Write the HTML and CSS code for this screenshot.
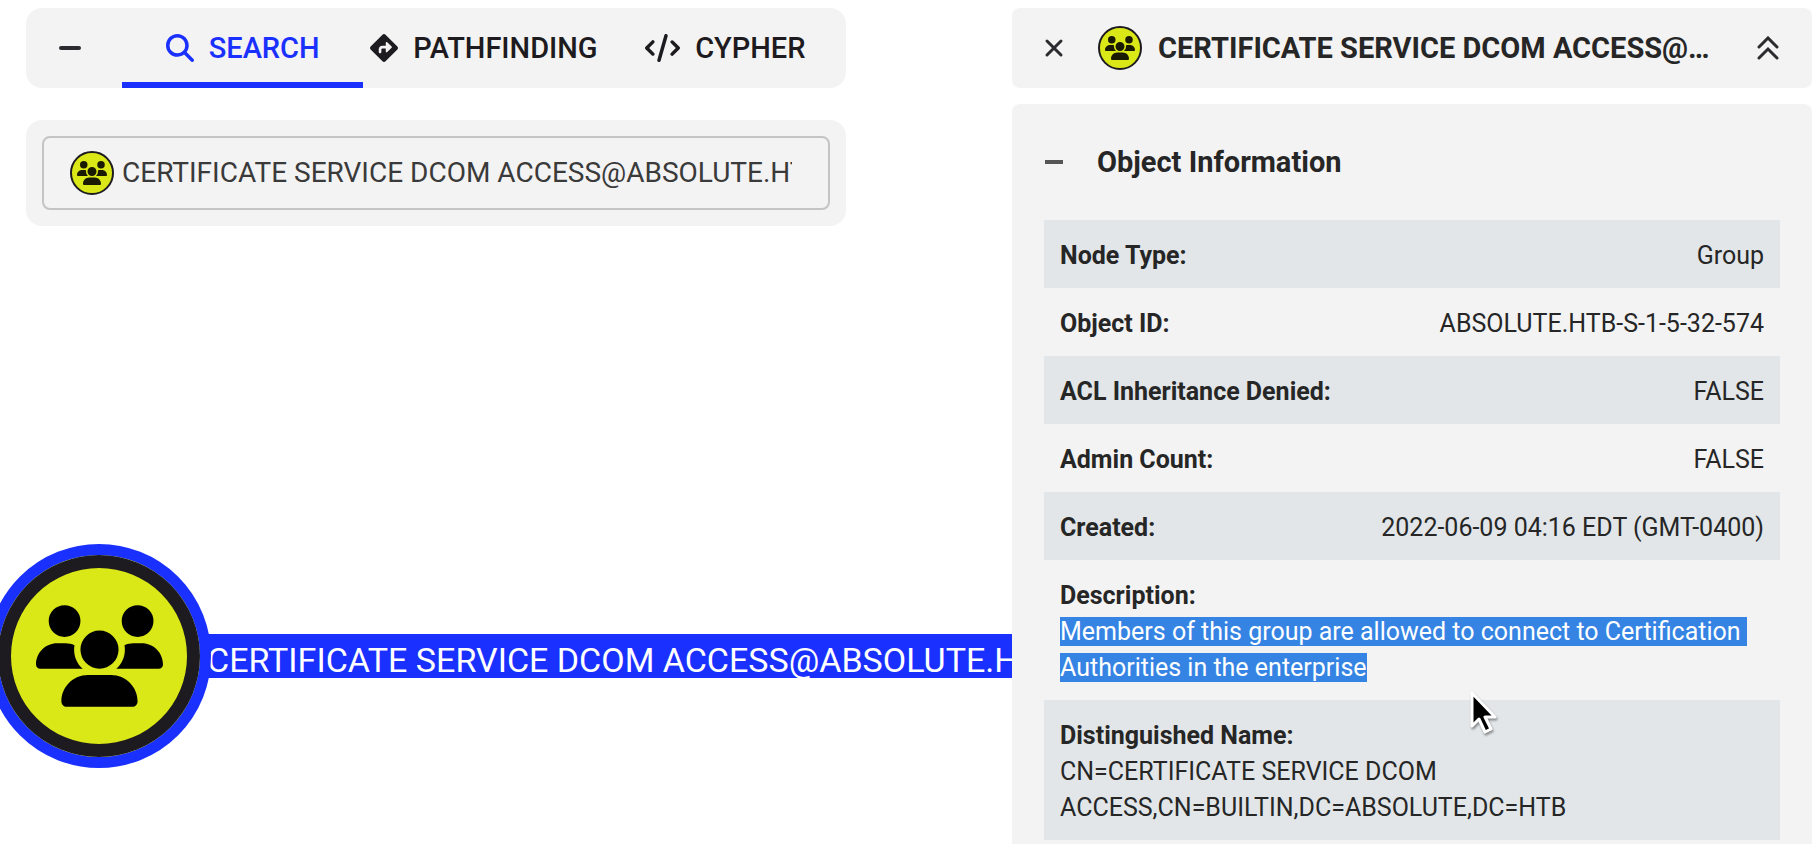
FILE: index.html
```html
<!DOCTYPE html>
<html lang="en">
<head>
<meta charset="utf-8">
<title>Explore</title>
<link rel="stylesheet" href="styles.css">
</head>
<body>
<svg class="sprite" aria-hidden="true">
  <symbol id="users" viewBox="0 0 640 512"><path d="M144 0a80 80 0 1 1 0 160A80 80 0 1 1 144 0zM512 0a80 80 0 1 1 0 160A80 80 0 1 1 512 0zM0 298.7C0 239.8 47.8 192 106.7 192h42.7c15.9 0 31 3.5 44.6 9.7c-1.3 7.2-1.9 14.7-1.9 22.3c0 38.2 16.8 72.5 43.3 96c-.2 0-.4 0-.7 0H21.3C9.6 320 0 310.4 0 298.7zM405.3 320c-.2 0-.4 0-.7 0c26.6-23.5 43.3-57.8 43.3-96c0-7.6-.7-15-1.9-22.3c13.6-6.3 28.7-9.7 44.6-9.7h42.7C592.2 192 640 239.8 640 298.7c0 11.8-9.6 21.3-21.3 21.3H405.3zM224 224a96 96 0 1 1 192 0 96 96 0 1 1 -192 0zM128 485.3C128 411.7 187.7 352 261.3 352H378.7C452.3 352 512 411.7 512 485.3c0 14.7-11.9 26.7-26.7 26.7H154.7c-14.7 0-26.7-11.9-26.7-26.7z"/></symbol>
</svg>
<main class="explore">
  <section class="graph" aria-label="Graph">
    <div class="node-label">CERTIFICATE SERVICE DCOM ACCESS@ABSOLUTE.HTB</div>
    <div class="node"><svg class="node-glyph" aria-hidden="true"><use href="#users"/></svg></div>
  </section>

  <section class="search">
    <div class="tabs-bar">
      <button class="icon-button collapse" aria-label="Collapse"><svg width="24" height="24" viewBox="0 0 24 24"><path d="M3 12H21" class="line heavy"/></svg></button>
      <div class="tabs" role="tablist">
        <button class="tab tab-active" role="tab" aria-selected="true"><svg width="28" height="28" viewBox="0 0 512 512"><path d="M416 208c0 45.9-14.9 88.3-40 122.7L502.6 457.4c12.5 12.5 12.5 32.8 0 45.3s-32.8 12.5-45.3 0L330.7 376c-34.4 25.2-76.8 40-122.7 40C93.1 416 0 322.9 0 208S93.1 0 208 0S416 93.1 416 208zM208 352a144 144 0 1 0 0-288 144 144 0 1 0 0 288z"/></svg>SEARCH</button>
        <button class="tab" role="tab" aria-selected="false"><svg width="28" height="28" viewBox="0 0 512 512"><path d="M227.7 11.7c15.6-15.6 40.9-15.6 56.6 0l216 216c15.6 15.6 15.6 40.9 0 56.6l-216 216c-15.6 15.6-40.9 15.6-56.6 0l-216-216c-15.6-15.6-15.6-40.9 0-56.6l216-216zm87.6 137c-4.6-4.6-11.5-5.9-17.4-3.5s-9.9 8.3-9.9 14.8v56H224c-35.3 0-64 28.7-64 64v48c0 13.3 10.7 24 24 24s24-10.7 24-24V280c0-8.8 7.2-16 16-16h64v56c0 6.5 3.9 12.3 9.9 14.8s12.9 1.1 17.4-3.5l80-80c6.2-6.2 6.2-16.4 0-22.6l-80-80z"/></svg>PATHFINDING</button>
        <button class="tab" role="tab" aria-selected="false"><svg width="35" height="28" viewBox="0 0 640 512"><path d="M392.8 1.2c-17-4.9-34.7 5-39.6 22l-128 448c-4.9 17 5 34.7 22 39.6s34.7-5 39.6-22l128-448c4.9-17-5-34.7-22-39.6zm80.6 120.1c-12.5 12.5-12.5 32.8 0 45.3L562.7 256l-89.4 89.4c-12.5 12.5-12.5 32.8 0 45.3s32.8 12.5 45.3 0l112-112c12.5-12.5 12.5-32.8 0-45.3l-112-112c-12.5-12.5-32.8-12.5-45.3 0zm-306.7 0c-12.5-12.5-32.8-12.5-45.3 0l-112 112c-12.5 12.5-12.5 32.8 0 45.3l112 112c12.5 12.5 32.8 12.5 45.3 0s12.5-32.8 0-45.3L77.3 256l89.4-89.4c12.5-12.5 12.5-32.8 0-45.3z"/></svg>CYPHER</button>
      </div>
    </div>
    <div class="search-card">
      <label class="search-field">
        <span class="badge"><svg width="30" height="24" aria-hidden="true"><use href="#users"/></svg></span>
        <input class="search-input" type="text" aria-label="Search nodes" value="CERTIFICATE SERVICE DCOM ACCESS@ABSOLUTE.HTB">
      </label>
    </div>
  </section>

  <aside class="info">
    <header class="info-header">
      <button class="icon-button" aria-label="Close"><svg width="20" height="20" viewBox="0 0 20 20"><path d="M3 3L17 17M17 3L3 17" class="line"/></svg></button>
      <span class="badge"><svg width="30" height="24" aria-hidden="true"><use href="#users"/></svg></span>
      <h1 class="info-title">CERTIFICATE SERVICE DCOM ACCESS@ABSOLUTE.HTB</h1>
      <button class="icon-button" aria-label="Collapse all"><svg width="24" height="24" viewBox="0 0 24 24"><path d="M3 11L12 2L21 11M3 22L12 13L21 22" class="line"/></svg></button>
    </header>
    <div class="info-body">
      <div class="section-head">
        <button class="icon-button" aria-label="Collapse section"><svg width="20" height="20" viewBox="0 0 20 20"><path d="M1 10H19" class="line muted"/></svg></button>
        <h2 class="section-title">Object Information</h2>
      </div>
      <dl class="fields">
        <div class="field"><dt>Node Type:</dt><dd>Group</dd></div>
        <div class="field"><dt>Object ID:</dt><dd>ABSOLUTE.HTB-S-1-5-32-574</dd></div>
        <div class="field"><dt>ACL Inheritance Denied:</dt><dd>FALSE</dd></div>
        <div class="field"><dt>Admin Count:</dt><dd>FALSE</dd></div>
        <div class="field"><dt>Created:</dt><dd>2022-06-09 04:16 EDT (GMT-0400)</dd></div>
        <div class="field field-stacked"><dt>Description:</dt><dd><mark class="selected">Members of this group are allowed to connect to Certification Authorities in the enterprise</mark></dd></div>
        <div class="field field-stacked"><dt>Distinguished Name:</dt><dd>CN=CERTIFICATE SERVICE DCOM ACCESS,CN=BUILTIN,DC=ABSOLUTE,DC=HTB</dd></div>
      </dl>
    </div>
  </aside>
  <svg class="pointer" width="30" height="46" viewBox="0 0 30 46" aria-hidden="true"><path d="M3 3V36L10 29L16 42L22 39L16 27H26Z" fill="#000" stroke="#fff" stroke-width="3" stroke-linejoin="round"/></svg>
</main>
</body>
</html>
```
FILE: styles.css
```css
* { box-sizing: border-box; }

body {
  margin: 0;
  background: #fff;
  color: #262626;
  font-family: Roboto, "Liberation Sans", sans-serif;
  font-size: 25px;
  line-height: 36px;
}

button {
  border: 0;
  padding: 0;
  background: none;
  color: inherit;
  font: inherit;
  cursor: pointer;
}

svg { display: block; flex: none; fill: currentColor; }
.sprite { position: absolute; width: 0; height: 0; }
.line { fill: none; stroke: #2b2b30; stroke-width: 3; stroke-linecap: round; }
.heavy { stroke-width: 4; }
.muted { stroke: #555; stroke-width: 4; stroke-linecap: butt; }

.explore {
  position: relative;
  display: grid;
  grid-template-columns: minmax(0, 820fr) minmax(0, 800fr);
  column-gap: 166px;
  height: 100vh;
  padding: 8px 4px 0 26px;
  overflow: hidden;
}

/* Graph canvas */
.graph { position: absolute; inset: 0; overflow: hidden; }

.node {
  position: absolute;
  left: -13px;
  top: 544px;
  display: grid;
  place-items: center;
  width: 224px;
  height: 224px;
  border: 11px solid #1a30ff;
  border-radius: 50%;
  background: #dbe817;
  color: #000;
  box-shadow: inset 0 0 0 13px #1d1b20;
}

.node-glyph { width: 127px; height: 102px; }

.node-label {
  position: absolute;
  left: 180px;
  top: 634px;
  padding: 8px 0 0 27px;
  background: #1a30ff;
  color: #fff;
  font-size: 34px;
  line-height: 36px;
  white-space: nowrap;
}

/* Search panel */
.search {
  position: relative;
  display: flex;
  flex-direction: column;
  gap: 32px;
}

.tabs-bar {
  display: flex;
  height: 80px;
  border-radius: 16px;
  background: #f3f3f3;
}

.collapse { width: 96px; padding-right: 8px; }
.tabs { flex: 1; display: grid; grid-template-columns: repeat(3, 1fr); }

.tab {
  display: flex;
  align-items: center;
  justify-content: center;
  gap: 15px;
  border: solid transparent;
  border-width: 6px 0;
  color: #1d1b20;
  font-size: 29px;
  font-weight: 500;
}

.tab-active { border-bottom-color: #1a30ff; color: #1a30ff; }

.search-card { padding: 16px; border-radius: 16px; background: #f3f3f3; }

.search-field {
  display: flex;
  align-items: center;
  gap: 8px;
  height: 74px;
  padding: 0 36px 0 26px;
  border: 2px solid #c4c4c4;
  border-radius: 8px;
}

.badge {
  flex: none;
  display: grid;
  place-items: center;
  width: 44px;
  height: 44px;
  border: 2px solid #1d1b20;
  border-radius: 50%;
  background: #dbe817;
  color: #1a1a00;
}

.search-input {
  flex: 1;
  min-width: 0;
  border: 0;
  padding: 0;
  background: none;
  color: #3a3a3a;
  font: inherit;
  font-size: 28px;
  outline: 0;
}

/* Object details */
.info {
  position: relative;
  display: flex;
  flex-direction: column;
  gap: 16px;
  min-height: 0;
}

.icon-button { display: grid; place-items: center; flex: none; }

.info-header {
  display: flex;
  align-items: center;
  height: 80px;
  flex: none;
  padding: 0 32px;
  border-radius: 8px;
  background: #f3f3f3;
}

.info-header .badge { margin-left: 34px; }

.info-title {
  flex: 1;
  min-width: 0;
  margin: 0 42px 0 16px;
  overflow: hidden;
  font-size: 29px;
  font-weight: 700;
  text-overflow: ellipsis;
  white-space: nowrap;
}

.info-body {
  flex: 1;
  padding: 0 32px;
  border-radius: 8px 8px 0 0;
  background: #f3f3f3;
}

.section-head { display: flex; align-items: center; gap: 33px; height: 116px; }
.section-title { margin: 0; font-size: 29px; font-weight: 700; }

.fields { margin: 0; }
.field { display: flex; justify-content: space-between; padding: 18px 16px 14px; }
.field:nth-child(odd) { background: #e2e6e9; }
.field-stacked { display: block; }
.field dt { font-weight: 700; }
.field dd { margin: 0; }

.selected {
  background: #3584e4;
  color: #fff;
  white-space: pre-wrap;
}

.pointer {
  position: absolute;
  left: 1469px;
  top: 690px;
  filter: drop-shadow(1px 2px 1px rgba(0, 0, 0, .4));
}
```
